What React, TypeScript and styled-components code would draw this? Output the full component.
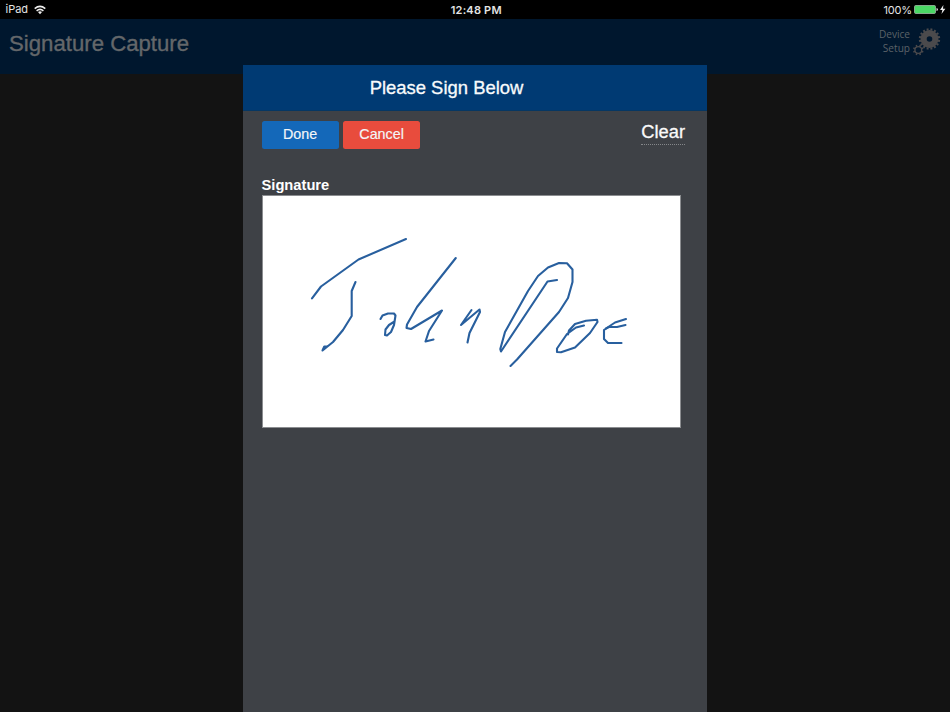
import React from "react";
import styled, { createGlobalStyle } from "styled-components";

const GlobalStyle = createGlobalStyle`
  * { box-sizing: border-box; }
  html, body { margin: 0; padding: 0; background: #131313; overflow: hidden; }
  body { font-family: "Liberation Sans", Arial, sans-serif; }
`;

const Screen = styled.div`
  display: grid;
  grid-template-rows: 19px 55px 638px;
  grid-template-columns: 950px;
  width: 950px;
  height: 712px;
  overflow: hidden;
  background: #131313;
`;

const StatusBar = styled.div`
  display: grid;
  grid-template-columns: 1fr 1fr 1fr;
  align-items: center;
  background: #000;
  color: #e4e4e4;
  font-family: Inter, sans-serif;
  font-size: 11px;
  line-height: 19px;
  padding: 0 4px 0 5.5px;
`;

const StatusGroup = styled.div<{ $align: string }>`
  display: flex;
  align-items: center;
  justify-content: ${(p) => p.$align};
  height: 19px;
`;

const Percent = styled.span`
  letter-spacing: -0.15px;
  padding-top: 1px;
`;

const Clock = styled.span`
  font-weight: 600;
  font-size: 11px;
  letter-spacing: 0.2px;
  padding: 1px 0 0 1px;
`;

const WifiIcon = styled.svg`
  margin-left: 5.5px;
`;

const BatteryIcon = styled.svg`
  margin-left: 2px;
`;

const PageHeader = styled.header`
  display: flex;
  justify-content: space-between;
  align-items: flex-start;
  background: #00172e;
  padding: 0 9px;
`;

const PageTitle = styled.h1`
  margin: 11px 0 0;
  font-size: 22.2px;
  font-weight: 400;
  line-height: 28px;
  color: #64676a;
  -webkit-text-stroke: 0.35px #64676a;
`;

const DeviceSetup = styled.div`
  display: flex;
  align-items: flex-start;
  gap: 3px;
  padding-top: 8px;
  color: #5c6268;
  font-family: "Open Sans", sans-serif;
  font-size: 10.1px;
  line-height: 14px;
  text-align: right;
`;

const Modal = styled.section`
  position: absolute;
  left: 243px;
  top: 65px;
  width: 464px;
  height: 647px;
  background: #3e4146;
`;

const ModalHeader = styled.header`
  display: flex;
  justify-content: center;
  height: 46px;
  padding-right: 57px;
  background: #003a73;
  border-bottom: 1px solid #063763;
`;

const ModalTitle = styled.h2`
  margin: 0;
  font-size: 18.45px;
  font-weight: 400;
  line-height: 45px;
  color: #f8fafc;
  -webkit-text-stroke: 0.3px #f8fafc;
`;

const Toolbar = styled.div`
  display: flex;
  justify-content: space-between;
  padding: 9.5px 22px 0 18.6px;
  height: 65px;
`;

const Buttons = styled.div`
  display: flex;
  gap: 4.5px;
`;

const Button = styled.button<{ $color: string }>`
  width: 77px;
  height: 28px;
  padding: 0 0 1px;
  border: 0;
  border-radius: 2.5px;
  background: ${(p) => p.$color};
  color: #f4f6f8;
  font: 14.3px/27px "Liberation Sans", Arial, sans-serif;
  -webkit-text-stroke: 0.15px #f4f6f8;
`;

const ClearLink = styled.a`
  height: 24px;
  border-bottom: 1px dotted #85878a;
  color: #fafafa;
  font-size: 18.3px;
  line-height: 21px;
  -webkit-text-stroke: 0.3px #fafafa;
`;

const Field = styled.div`
  padding-left: 19px;
`;

const Label = styled.div`
  height: 19px;
  margin-left: -0.5px;
  color: #fff;
  font-size: 14.7px;
  font-weight: 700;
  line-height: 18px;
`;

const Pad = styled.div`
  width: 419px;
  height: 233px;
  border: 1px solid #8b8d90;
  background: #fff;
`;

const Ink = styled.svg`
  display: block;
  fill: none;
  stroke: #285f9e;
  stroke-width: 2.1;
  stroke-linecap: round;
  stroke-linejoin: round;
`;

const strokes = [
  "M312 298.3L321 286.5L358.5 259.5L406 239",
  "M355.5 282L351.7 291V316L343 330L333 342L322.5 350.5L324.3 346.5L327 346.5",
  "M380.5 319L382.5 315.5L388 313.5H394L395.5 315.5L394 325L391 332L387 335.5L385 335L385.5 329.5L389 325L394.5 321.5",
  "M455.8 258L417 307L407 324.5L406.5 328L411 329L442 310.5L429 331L425.5 341.5L433.5 339.5",
  "M471.5 310L461 325L479.5 309.5L480 312L469.5 333L467.5 342.5",
  "M557 280L547.5 281.5L501 351.5L500.3 349L505 332L528 291L538 276L548 267.5L559 263L567 263.2L572.5 269.5V282L568 298L559 312L517 359.5L510.5 366",
  "M568 334.5L569 330.5L575 324L586 320.7L597 319.7L597.5 322L590 333L575 347.5L561 352.3L557 352V348.5L567 334L576 327.5L584 325.5",
  "M626 319L615 322.5L609 326.5L604 330V339L608 343H621.5",
  "M625.5 325L617 327L609 327L606 328.5",
];

function Gear({ cx, cy, inner, teeth, ring, width }: {
  cx: number; cy: number; inner: number; teeth: number; ring: number; width: number;
}) {
  return (
    <g fill="none" stroke="#4b4a4c">
      <circle cx={cx} cy={cy} r={(inner + ring) / 2} strokeWidth={ring - inner} />
      {Array.from({ length: teeth }, (_, i) => {
        const a = ((i + 0.5) * 2 * Math.PI) / teeth;
        return (
          <line
            key={i}
            x1={cx + Math.cos(a) * (ring - 0.5)}
            y1={cy + Math.sin(a) * (ring - 0.5)}
            x2={cx + Math.cos(a) * (ring + width * 0.85)}
            y2={cy + Math.sin(a) * (ring + width * 0.85)}
            strokeWidth={width}
          />
        );
      })}
    </g>
  );
}

export default function App() {
  return (
    <>
      <GlobalStyle />
      <Screen>
        <StatusBar>
          <StatusGroup $align="flex-start">
            <span>iPad</span>
            <WifiIcon width="12" height="10" viewBox="0 0 12 10" fill="none" stroke="#efefef" strokeWidth="1.5">
              <path d="M.7 3.6Q6-.9 11.3 3.6M2.6 5.8Q6 3 9.4 5.8" />
              <path d="M4 7.1Q6 5.5 8 7.1L6 9.2Z" fill="#efefef" stroke="none" />
            </WifiIcon>
          </StatusGroup>
          <StatusGroup $align="center"><Clock>12:48 PM</Clock></StatusGroup>
          <StatusGroup $align="flex-end">
            <Percent>100%</Percent>
            <BatteryIcon width="32" height="11" viewBox="0 0 32 11">
              <rect x=".5" y="1.5" width="21" height="8" rx="1.2" fill="#4bd864" stroke="#a2b7a5" strokeWidth=".8" />
              <path d="M22.5 4v3Q24 6.8 24 5.5T22.5 4" fill="#dedede" />
              <path d="M29.4 1L26 6h2.4l-.9 4L31.4 4.7H29Z" fill="#efefef" />
            </BatteryIcon>
          </StatusGroup>
        </StatusBar>
        <PageHeader>
          <PageTitle>Signature Capture</PageTitle>
          <DeviceSetup>
            <div>Device<br />Setup</div>
            <svg width="28" height="30" viewBox="913 27 28 30">
              <Gear cx={929.5} cy={39} inner={2.8} ring={9} width={2} teeth={16} />
              <Gear cx={918.3} cy={50} inner={2.7} ring={4.1} width={1.5} teeth={8} />
            </svg>
          </DeviceSetup>
        </PageHeader>
        <Modal>
          <ModalHeader><ModalTitle>Please Sign Below</ModalTitle></ModalHeader>
          <Toolbar>
            <Buttons>
              <Button $color="#1468b9">Done</Button>
              <Button $color="#e84c3d">Cancel</Button>
            </Buttons>
            <ClearLink>Clear</ClearLink>
          </Toolbar>
          <Field>
            <Label>Signature</Label>
            <Pad>
              <Ink width="417" height="231" viewBox="263 196 417 231">
                {strokes.map((d) => <path key={d} d={d} />)}
              </Ink>
            </Pad>
          </Field>
        </Modal>
      </Screen>
    </>
  );
}
